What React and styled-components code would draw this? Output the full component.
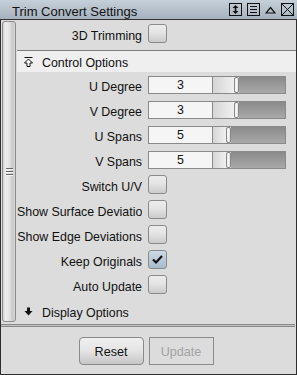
import React from "react";
import styled, { createGlobalStyle, css } from "styled-components";

const GlobalStyle = createGlobalStyle`
  html, body { margin: 0; padding: 0; background: #dcdcdc; }
  body { font-family: "Liberation Sans", Arial, sans-serif; }
  * { box-sizing: border-box; }
`;

const Window = styled.div`
  width: 297px;
  height: 375px;
  display: flex;
  flex-direction: column;
  background: #dcdcdc;
  color: #111;
`;

const TitleBar = styled.div`
  height: 20px;
  flex: none;
  display: flex;
  align-items: center;
  padding: 0 3px 0 12px;
  border-bottom: 1px solid #333;
  background: linear-gradient(#c6d0da, #a6b2be);
`;

const Title = styled.div`
  flex: 1;
  font-size: 13px;
  padding-top: 4px;
  white-space: nowrap;
`;

const TitleIcons = styled.div`
  display: flex;
  align-items: center;
  gap: 5px;
`;

const Body = styled.div`
  flex: 1;
  display: flex;
  flex-direction: column;
  border: 1px solid #2e2e2e;
  border-top: none;
`;

const Main = styled.div`
  height: 304px;
  flex: none;
  display: flex;
`;

const Sidebar = styled.div`
  width: 16px;
  flex: none;
  display: flex;
  padding: 1px 1px 2px 1px;
`;

const Strip = styled.div`
  flex: 1;
  display: flex;
  align-items: center;
  justify-content: center;
  border: 1px solid #8c8c8c;
  border-radius: 3px;
  background: linear-gradient(to right, #cfcfcf 0%, #ededed 20%, #e4e4e4 50%, #c9c9c9 80%, #d8d8d8 100%);
`;

const Grip = styled.div`
  display: flex;
  flex-direction: column;
  gap: 1px;
`;

const GripLine = styled.div`
  width: 7px;
  height: 2px;
  border-top: 1px solid #666;
  border-bottom: 1px solid #f4f4f4;
`;

const Content = styled.div`
  flex: 1;
  display: flex;
  flex-direction: column;
  padding-top: 1px;
`;

const Row = styled.div`
  display: flex;
  align-items: center;
  height: ${(p) => (p.$top ? "19px" : "25px")};
  flex: none;
  ${(p) =>
    p.$top &&
    css`
      margin: 3px 0 7px;
    `}
`;

const Label = styled.div`
  width: 125px;
  flex: none;
  margin-right: 6px;
  text-align: right;
  white-space: nowrap;
  overflow: hidden;
  font-size: 12.4px;
  line-height: 14px;
  padding-top: 4px;
`;

const Divider = styled.div`
  height: 1px;
  flex: none;
  background: #7d7d7d;
`;

const SectionHeader = styled.div`
  height: 21px;
  flex: none;
  display: flex;
  align-items: center;
  padding-left: 7px;
  gap: 9px;
  font-size: 12.4px;
  background: ${(p) => (p.$open ? "#efefef" : "transparent")};
  margin-top: ${(p) => (p.$open ? "0" : "4px")};
`;

const HeaderText = styled.span`
  padding-top: 2px;
  white-space: nowrap;
`;

const Field = styled.div`
  width: 65px;
  height: 18px;
  flex: none;
  border: 1px solid #8a8a8a;
  background: #f5f5f5;
  font-size: 12.4px;
  display: flex;
  align-items: center;
  justify-content: center;
  padding-top: 1px;
`;

const Slider = styled.div`
  width: 73px;
  height: 18px;
  flex: none;
  display: flex;
  align-items: stretch;
  border: 1px solid #8a8a8a;
  border-left: none;
`;

const SliderFill = styled.div`
  flex: none;
  background: linear-gradient(to right, #d6d6d6, #f0f0f0);
`;

const SliderHandle = styled.div`
  width: 5px;
  flex: none;
  border: 1px solid #8a8a8a;
  border-radius: 2px;
  background: linear-gradient(to right, #e8e8e8, #fafafa, #dadada);
`;

const SliderTrack = styled.div`
  flex: 1;
  background: linear-gradient(#8a8a8a, #a9a9a9);
`;

const Check = styled.div`
  width: 19px;
  height: 19px;
  flex: none;
  border: 1px solid #8a8a8a;
  border-radius: 3px;
  display: flex;
  align-items: center;
  justify-content: center;
  background: ${(p) =>
    p.$checked
      ? "linear-gradient(#cdd9e5, #a8bbcc)"
      : "linear-gradient(#ececec 0%, #e4e4e4 45%, #cbcbcb 100%)"};
`;

const Separator = styled.div`
  height: 3px;
  flex: none;
  margin-right: 1px;
  border-top: 1px solid #8a8a8a;
  border-bottom: 1px solid #8a8a8a;
  background: #c2c2c2;
`;

const Footer = styled.div`
  flex: 1;
  display: flex;
  justify-content: center;
  align-items: flex-start;
  gap: 5px;
  padding: 10px 5px 0 0;
`;

const Button = styled.button`
  width: 65px;
  height: 28px;
  padding: 2px 0 0;
  font-family: "Liberation Sans", Arial, sans-serif;
  font-size: 12.6px;
  color: #111;
  border: 1px solid #8a8a8a;
  border-radius: 4px;
  background: linear-gradient(#f0f0f0 0%, #e4e4e4 50%, #c6c6c6 100%);
  ${(p) =>
    p.disabled &&
    css`
      border-radius: 0;
      background: #dcdcdc;
      color: #a3a3a3;
    `}
`;

const Icon = styled.svg`
  display: block;
  flex: none;
`;

const BoxIcon = ({ children, w = 13 }) => (
  <Icon width={w} height="13" viewBox={`0 0 ${w} 13`}>
    {children}
  </Icon>
);

const sliders = [
  { label: "U Degree", value: 3, pos: 21 },
  { label: "V Degree", value: 3, pos: 21 },
  { label: "U Spans", value: 5, pos: 13 },
  { label: "V Spans", value: 5, pos: 13 },
];

const checks = [
  { label: "Switch U/V", checked: false },
  { label: "Show Surface Deviations", checked: false },
  { label: "Show Edge Deviations", checked: false },
  { label: "Keep Originals", checked: true },
  { label: "Auto Update", checked: false },
];

const CheckBox = ({ checked }) => (
  <Check $checked={checked}>
    {checked && (
      <svg width="13" height="11" viewBox="0 0 13 11">
        <path d="M2 5.5 L5 8.5 L11 2" fill="none" stroke="#111" strokeWidth="2.2" />
      </svg>
    )}
  </Check>
);

export default function App() {
  return (
    <>
      <GlobalStyle />
      <Window>
        <TitleBar>
          <Title>Trim Convert Settings</Title>
          <TitleIcons>
            <BoxIcon>
              <rect x="0.5" y="0.5" width="12" height="12" fill="none" stroke="#111" />
              <line x1="6.5" y1="4" x2="6.5" y2="9" stroke="#111" strokeWidth="1.6" />
              <polygon points="3.5,5 9.5,5 6.5,2" fill="#111" />
              <polygon points="3.5,8 9.5,8 6.5,11" fill="#111" />
            </BoxIcon>
            <BoxIcon>
              <rect x="0.5" y="0.5" width="12" height="12" fill="none" stroke="#111" />
              <line x1="3" y1="3.5" x2="10" y2="3.5" stroke="#111" />
              <line x1="3" y1="6.5" x2="10" y2="6.5" stroke="#111" />
              <line x1="3" y1="9.5" x2="10" y2="9.5" stroke="#111" />
            </BoxIcon>
            <BoxIcon w={11}>
              <polygon points="1,10 10,10 5.5,4.5" fill="none" stroke="#111" strokeWidth="1.2" />
            </BoxIcon>
            <BoxIcon>
              <rect x="0.5" y="0.5" width="12" height="12" fill="none" stroke="#111" />
              <line x1="0.5" y1="0.5" x2="12.5" y2="12.5" stroke="#111" />
              <line x1="12.5" y1="0.5" x2="0.5" y2="12.5" stroke="#111" />
            </BoxIcon>
          </TitleIcons>
        </TitleBar>
        <Body>
          <Main>
            <Sidebar>
              <Strip>
                <Grip>
                  <GripLine />
                  <GripLine />
                  <GripLine />
                </Grip>
              </Strip>
            </Sidebar>
            <Content>
              <Row $top>
                <Label>3D Trimming</Label>
                <CheckBox checked={false} />
              </Row>
              <Divider />
              <SectionHeader $open>
                <svg width="9" height="10" viewBox="0 0 9 10">
                  <line x1="0.5" y1="0.5" x2="8.5" y2="0.5" stroke="#111" />
                  <polygon points="4.5,2 8.5,6 6,6 6,9.5 3,9.5 3,6 0.5,6" fill="#fff" stroke="#111" strokeWidth="1" />
                </svg>
                <HeaderText>Control Options</HeaderText>
              </SectionHeader>
              {sliders.map((s) => (
                <Row key={s.label}>
                  <Label>{s.label}</Label>
                  <Field>{s.value}</Field>
                  <Slider>
                    <SliderFill style={{ width: s.pos }} />
                    <SliderHandle />
                    <SliderTrack />
                  </Slider>
                </Row>
              ))}
              {checks.map((c) => (
                <Row key={c.label}>
                  <Label>{c.label}</Label>
                  <CheckBox checked={c.checked} />
                </Row>
              ))}
              <SectionHeader>
                <svg width="9" height="9" viewBox="0 0 9 9">
                  <rect x="3" y="0.5" width="3" height="4" fill="#111" />
                  <polygon points="0.5,4 8.5,4 4.5,8.5" fill="#111" />
                </svg>
                <HeaderText>Display Options</HeaderText>
              </SectionHeader>
            </Content>
          </Main>
          <Separator />
          <Footer>
            <Button>Reset</Button>
            <Button disabled>Update</Button>
          </Footer>
        </Body>
      </Window>
    </>
  );
}
